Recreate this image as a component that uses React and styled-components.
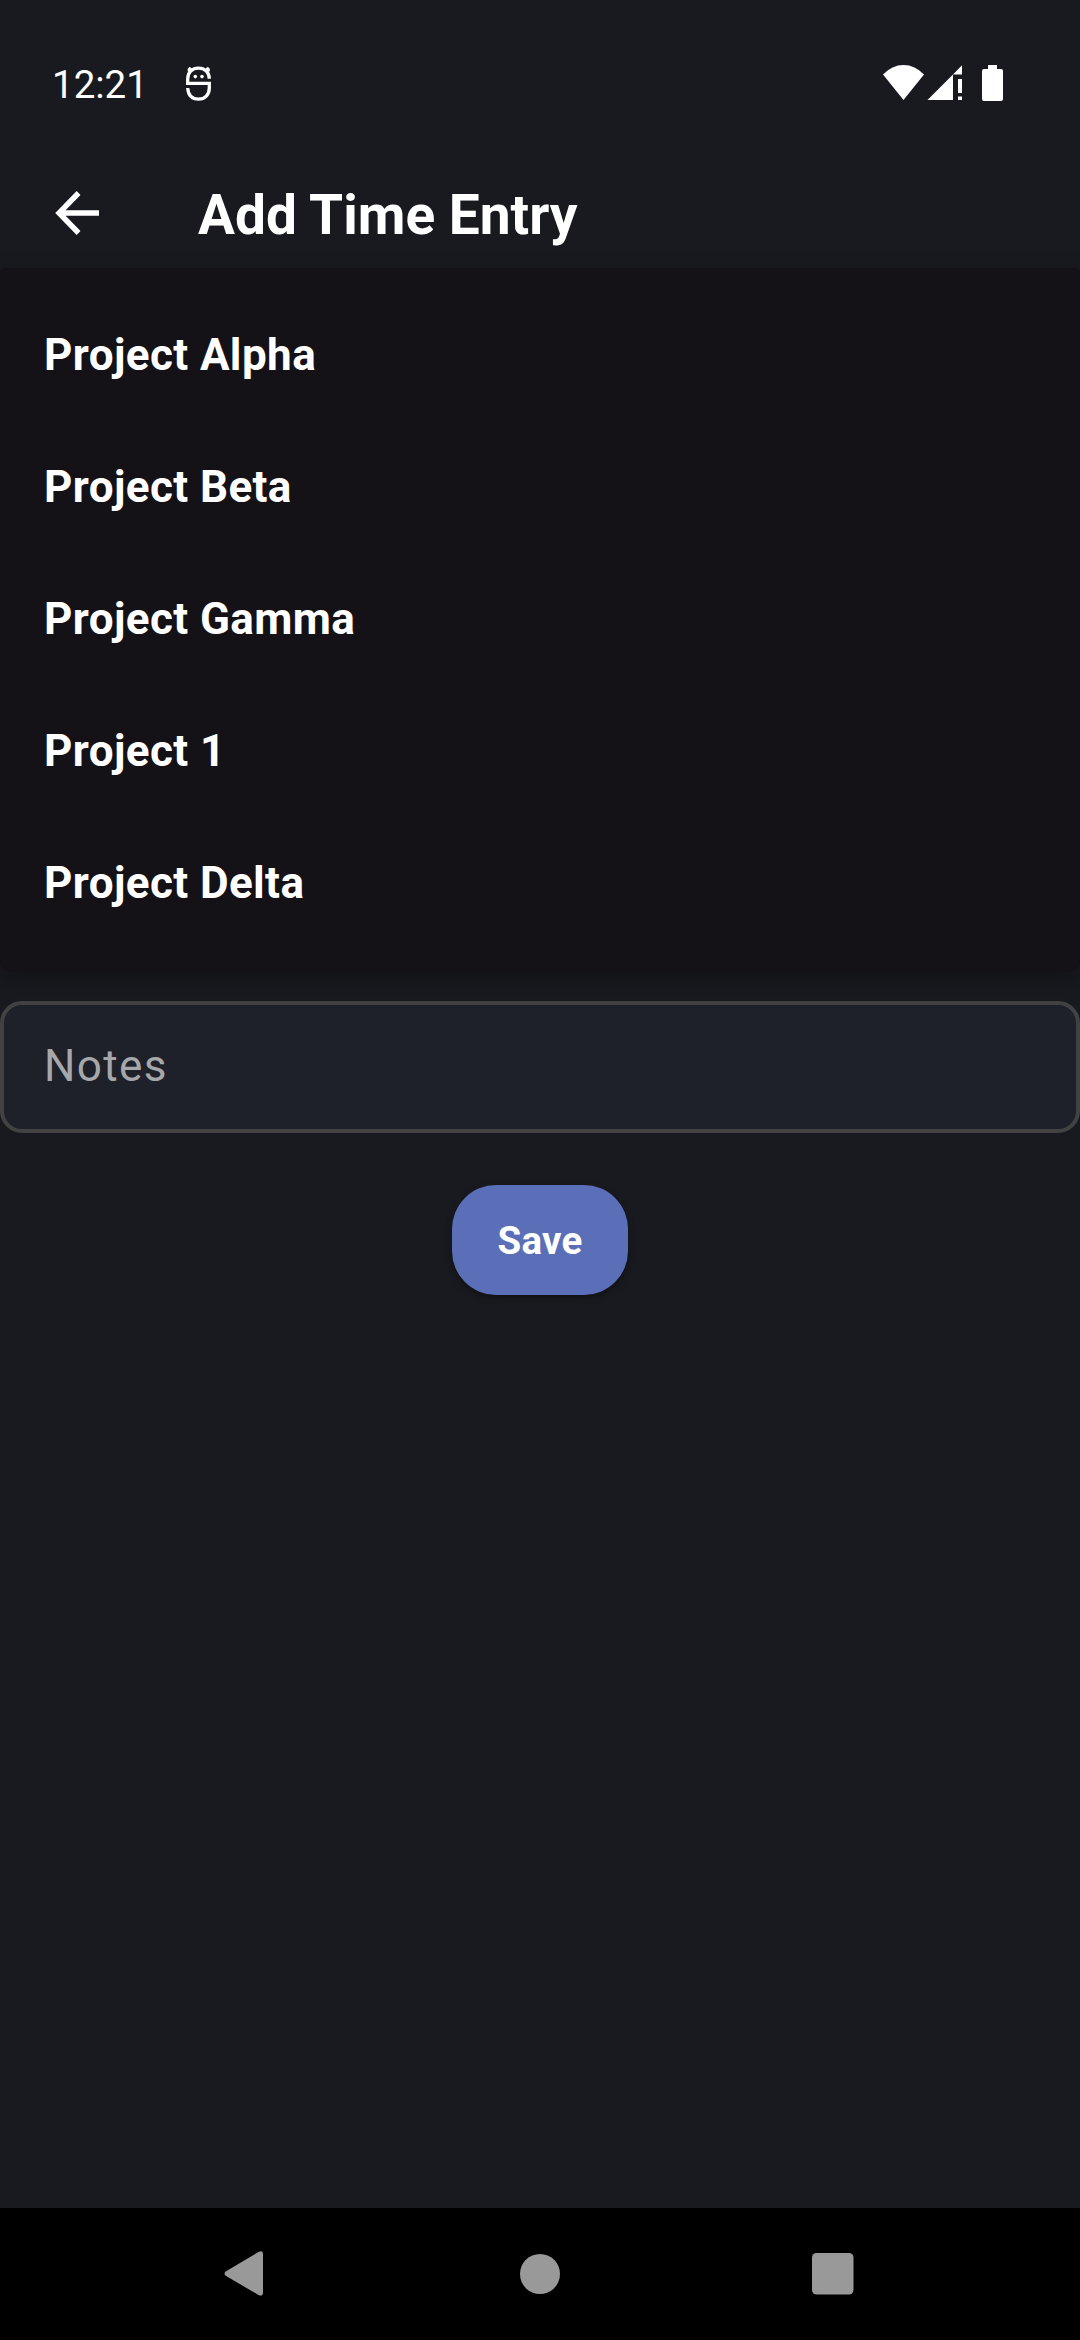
import React from "react";
import styled, { createGlobalStyle } from "styled-components";

const GlobalStyle = createGlobalStyle`
  * { box-sizing: border-box; }
  body { margin: 0; background: #191a1f; }
`;

const Screen = styled.div`
  width: 1080px;
  height: 2340px;
  display: flex;
  flex-direction: column;
  background: #191a1f;
  color: #fff;
  font-family: Roboto, "Noto Sans", sans-serif;
  overflow: hidden;
`;

const StatusBar = styled.header`
  height: 136px;
  flex: none;
  display: flex;
  align-items: flex-start;
  justify-content: space-between;
  padding: 62px 76px 0 52px;
`;

const StatusGroup = styled.div`
  display: flex;
  align-items: flex-start;
`;

const Clock = styled.time`
  width: 134px;
  padding-top: 1px;
  font-size: 38.5px;
  line-height: 44px;
  white-space: nowrap;
`;

const StatusIconBox = styled.div`
  padding-top: 4px;
`;

const SystemIcons = styled.div`
  padding-top: 3px;
`;

const Icon = styled.svg`
  display: block;
  flex: none;
  overflow: visible;
`;

const AppBar = styled.nav`
  height: 132px;
  flex: none;
  display: flex;
  align-items: flex-start;
  padding: 47px 0 0 55px;
`;

const BackButton = styled.button`
  width: 143px;
  padding: 8px 0 0;
  border: 0;
  background: none;
  color: inherit;
  flex: none;
`;

const Title = styled.h1`
  margin: 0;
  font-size: 55px;
  line-height: 64px;
  font-weight: 700;
  white-space: nowrap;
`;

const Menu = styled.ul`
  position: relative;
  flex: none;
  height: 704px;
  margin: 0;
  padding: 21px 0 23px;
  list-style: none;
  background: #141117;
  border-radius: 5px 5px 11px 11px;
  box-shadow: 0 9px 26px rgba(0, 0, 0, 0.3);
`;

const MenuItem = styled.li`
  height: 132px;
  padding-left: 44px;
  display: flex;
  align-items: center;
  font-size: 44px;
  font-weight: 700;
  letter-spacing: 0.41px;
`;

const Form = styled.main`
  flex: 1;
  display: flex;
  flex-direction: column;
  align-items: center;
  padding-top: 29px;
`;

const NotesField = styled.div`
  width: 1080px;
  height: 132px;
  display: flex;
  align-items: center;
  padding: 0 40px 2px;
  border: 4px solid #424242;
  border-radius: 22px;
  background: #1f212a;
  color: #a6a7aa;
  font-size: 44px;
  letter-spacing: 1.375px;
`;

const SaveButton = styled.button`
  width: 176px;
  height: 110px;
  margin-top: 52px;
  padding: 0;
  border: 0;
  border-radius: 44px;
  background: #5b6eb8;
  color: #fff;
  font: 700 38.5px Roboto, "Noto Sans", sans-serif;
  letter-spacing: 0.28px;
  box-shadow: 0 3px 6px rgba(0, 0, 0, 0.35);
`;

const NavBar = styled.footer`
  height: 132px;
  flex: none;
  display: flex;
  justify-content: space-between;
  align-items: center;
  padding: 0 226px;
  background: #000;
`;

const projects = ["Project Alpha", "Project Beta", "Project Gamma", "Project 1", "Project Delta"];

const DebugIcon = () => (
  <Icon width="26" height="36" viewBox="0 0 26 36" fill="none" stroke="#fff" strokeWidth="3.3">
    <path d="M23.3 12.8C23.3 6.5 19 2.2 12.5 2.2S1.7 6.5 1.7 13v4.3h21.6V22c0 6.7-4.3 11.2-10.8 11.2C6.2 33.2 2.2 29.2 1.7 22" />
    <path d="M5.5 5 2.5 2M20 5l3-3" />
    <path d="M2 5.4 5.2 2M23.5 5.4 20.3 2" strokeWidth="1.8" />
    <circle cx="9.3" cy="10.6" r="1.8" fill="#fff" stroke="none" />
    <circle cx="16" cy="10.6" r="1.8" fill="#fff" stroke="none" />
  </Icon>
);

const StatusIcons = () => (
  <Icon width="121" height="37" viewBox="0 0 121 37" fill="#fff">
    <path d="M0 9.5Q9 0 20.5 0T41 9.5L20.5 35Z" />
    <path d="M44.5 35 70 9.5V35ZM70 9.5 79 .3V9.5Z" />
    <path d="M75 14h4v14h-4ZM75 31.5h4V35h-4Z" />
    <path d="M105 0h9v4h4a2 2 0 0 1 2 2v28a2 2 0 0 1-2 2h-17a2 2 0 0 1-2-2V6a2 2 0 0 1 2-2h4Z" />
  </Icon>
);

export default function App() {
  return (
    <>
      <GlobalStyle />
      <Screen>
        <StatusBar>
          <StatusGroup>
            <Clock>12:21</Clock>
            <StatusIconBox><DebugIcon /></StatusIconBox>
          </StatusGroup>
          <SystemIcons><StatusIcons /></SystemIcons>
        </StatusBar>
        <AppBar>
          <BackButton aria-label="Back">
            <Icon width="44" height="44" viewBox="0 0 44 44" fill="none" stroke="#fff" strokeWidth="5.4">
              <path d="M23.6 2 4 22l19.6 20M4 22h40" />
            </Icon>
          </BackButton>
          <Title>Add Time Entry</Title>
        </AppBar>
        <Menu>
          {projects.map((name) => (
            <MenuItem key={name}>{name}</MenuItem>
          ))}
        </Menu>
        <Form>
          <NotesField>Notes</NotesField>
          <SaveButton>Save</SaveButton>
        </Form>
        <NavBar>
          <Icon width="42" height="46" viewBox="2 0 42 46" fill="#999">
            <path d="M1.7 20.5 34.5.9Q39 -1 39 3.2V41.5Q39 46 34.5 44L1.7 24.8Q-.6 22.7 1.7 20.5Z" />
          </Icon>
          <Icon width="42" height="42" viewBox="0 0 42 42" fill="#999">
            <circle cx="21" cy="21" r="20" />
          </Icon>
          <Icon width="42" height="42" viewBox="0 0 42 42" fill="#999">
            <rect width="41.5" height="41.5" rx="4.5" />
          </Icon>
        </NavBar>
      </Screen>
    </>
  );
}
